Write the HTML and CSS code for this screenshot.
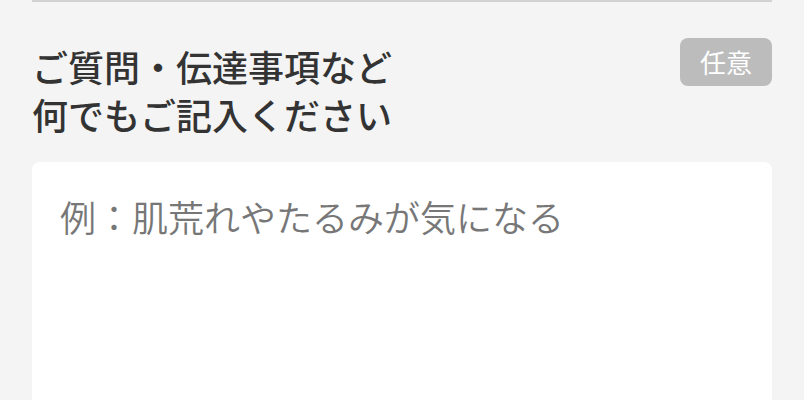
FILE: index.html
```html
<!DOCTYPE html>
<html lang="ja">
<head>
<meta charset="utf-8">
<title>ご質問</title>
<link rel="stylesheet" href="styles.css">
</head>
<body>
<div class="page">
  <div class="divider"></div>
  <div class="field-head">
    <h2 class="field-title"><span class="title-line">ご質問・伝達事項など</span><span class="title-line">何でもご記入ください</span></h2>
    <span class="badge">任意</span>
  </div>
  <textarea class="field-input" placeholder="例：肌荒れやたるみが気になる"></textarea>
</div>
</body>
</html>
```
FILE: styles.css
```css
html, body {
  margin: 0;
  padding: 0;
  background: #f4f4f4;
}
body {
  font-family: "Noto Sans CJK JP", "Noto Sans", sans-serif;
  color: #333333;
}
.page {
  padding: 0 32px;
}
.divider {
  height: 2px;
  background: #d2d2d2;
}
.field-head {
  display: flex;
  justify-content: space-between;
  align-items: flex-start;
  margin-top: 36px;
}
.field-title {
  margin: 4px 0 0;
  font-size: 36px;
  line-height: 48px;
  font-weight: 500;
  color: #333333;
}
.title-line {
  display: block;
}
.badge {
  display: flex;
  align-items: center;
  justify-content: center;
  width: 92px;
  height: 48px;
  border-radius: 8px;
  background: #bcbcbc;
  color: #ffffff;
  font-size: 26px;
  line-height: 1;
}
.field-input {
  display: block;
  box-sizing: border-box;
  width: 100%;
  height: 320px;
  margin-top: 24px;
  padding: 27px 28px;
  border: none;
  border-radius: 8px;
  background: #ffffff;
  font-family: "Noto Sans CJK JP", "Noto Sans", sans-serif;
  font-size: 36px;
  line-height: 54px;
  font-weight: 350;
  color: #333333;
  resize: none;
  outline: none;
}
.field-input::placeholder {
  color: #777777;
  opacity: 1;
}
```
